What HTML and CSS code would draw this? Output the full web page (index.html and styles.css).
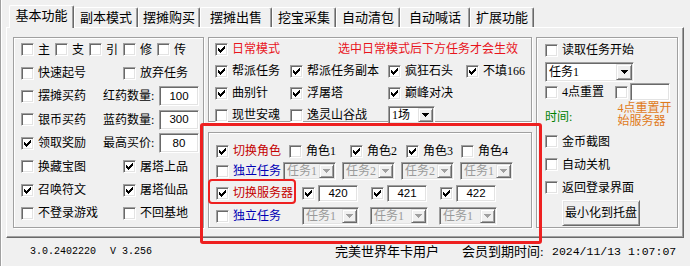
FILE: index.html
```html
<!DOCTYPE html>
<html lang="zh-CN">
<head>
<meta charset="utf-8">
<title>基本功能</title>
<link rel="stylesheet" href="styles.css">
</head>
<body>
<div class="win">
  <div class="tabs">
    <div class="tab sel">基本功能</div>
    <div class="tab w64">副本模式</div>
    <div class="tab w62">摆摊购买</div>
    <div class="tab w72">摆摊出售</div>
    <div class="tab w64">挖宝采集</div>
    <div class="tab w64">自动清包</div>
    <div class="tab w70">自动喊话</div>
    <div class="tab w64">扩展功能</div>
  </div>

  <div class="panel">
    <div class="gb gb-left">
      <div class="row">
        <label class="ck c34"><span class="cb"></span>主</label>
        <label class="ck c34"><span class="cb"></span>支</label>
        <label class="ck c34"><span class="cb"></span>引</label>
        <label class="ck c34"><span class="cb"></span>修</label>
        <label class="ck"><span class="cb"></span>传</label>
      </div>
      <div class="row">
        <label class="ck c102"><span class="cb"></span>快速起号</label>
        <label class="ck"><span class="cb"></span>放弃任务</label>
      </div>
      <div class="row">
        <label class="ck c82"><span class="cb"></span>摆摊买药</label>
        <span class="lbl c56">红药数量:</span>
        <span class="edit w40 h20">100</span>
      </div>
      <div class="row">
        <label class="ck c82"><span class="cb"></span>银币买药</label>
        <span class="lbl c56">蓝药数量:</span>
        <span class="edit w40 h20">300</span>
      </div>
      <div class="row">
        <label class="ck c82"><span class="cb"><svg class="mark" viewBox="0 0 7 7"><path d="M0 2h1v1h1v1h1V3h1V2h1V1h1V0h1v3H6v1H5v1H4v1H3v1H2V6H1V5H0z"/></svg></span>领取奖励</label>
        <span class="lbl c56">最高买价:</span>
        <span class="edit w40 h20">80</span>
      </div>
      <div class="row">
        <label class="ck c102"><span class="cb"></span>换藏宝图</label>
        <label class="ck"><span class="cb"><svg class="mark" viewBox="0 0 7 7"><path d="M0 2h1v1h1v1h1V3h1V2h1V1h1V0h1v3H6v1H5v1H4v1H3v1H2V6H1V5H0z"/></svg></span>屠塔上品</label>
      </div>
      <div class="row">
        <label class="ck c102"><span class="cb"><svg class="mark" viewBox="0 0 7 7"><path d="M0 2h1v1h1v1h1V3h1V2h1V1h1V0h1v3H6v1H5v1H4v1H3v1H2V6H1V5H0z"/></svg></span>召唤符文</label>
        <label class="ck"><span class="cb"><svg class="mark" viewBox="0 0 7 7"><path d="M0 2h1v1h1v1h1V3h1V2h1V1h1V0h1v3H6v1H5v1H4v1H3v1H2V6H1V5H0z"/></svg></span>屠塔仙品</label>
      </div>
      <div class="row">
        <label class="ck c102"><span class="cb"></span>不登录游戏</label>
        <label class="ck"><span class="cb"></span>不回基地</label>
      </div>
    </div>

    <div class="midcol">
      <div class="gb gb-mtop">
        <div class="row">
          <label class="ck c123 red"><span class="cb"><svg class="mark" viewBox="0 0 7 7"><path d="M0 2h1v1h1v1h1V3h1V2h1V1h1V0h1v3H6v1H5v1H4v1H3v1H2V6H1V5H0z"/></svg></span>日常模式</label>
          <span class="note red">选中日常模式后下方任务才会生效</span>
        </div>
        <div class="row">
          <label class="ck c75"><span class="cb"><svg class="mark" viewBox="0 0 7 7"><path d="M0 2h1v1h1v1h1V3h1V2h1V1h1V0h1v3H6v1H5v1H4v1H3v1H2V6H1V5H0z"/></svg></span>帮派任务</label>
          <label class="ck c98"><span class="cb"><svg class="mark" viewBox="0 0 7 7"><path d="M0 2h1v1h1v1h1V3h1V2h1V1h1V0h1v3H6v1H5v1H4v1H3v1H2V6H1V5H0z"/></svg></span>帮派任务副本</label>
          <label class="ck c78"><span class="cb"><svg class="mark" viewBox="0 0 7 7"><path d="M0 2h1v1h1v1h1V3h1V2h1V1h1V0h1v3H6v1H5v1H4v1H3v1H2V6H1V5H0z"/></svg></span>疯狂石头</label>
          <label class="ck"><span class="cb"><svg class="mark" viewBox="0 0 7 7"><path d="M0 2h1v1h1v1h1V3h1V2h1V1h1V0h1v3H6v1H5v1H4v1H3v1H2V6H1V5H0z"/></svg></span>不填166</label>
        </div>
        <div class="row">
          <label class="ck c75"><span class="cb"><svg class="mark" viewBox="0 0 7 7"><path d="M0 2h1v1h1v1h1V3h1V2h1V1h1V0h1v3H6v1H5v1H4v1H3v1H2V6H1V5H0z"/></svg></span>曲别针</label>
          <label class="ck c98"><span class="cb"><svg class="mark" viewBox="0 0 7 7"><path d="M0 2h1v1h1v1h1V3h1V2h1V1h1V0h1v3H6v1H5v1H4v1H3v1H2V6H1V5H0z"/></svg></span>浮屠塔</label>
          <label class="ck"><span class="cb"><svg class="mark" viewBox="0 0 7 7"><path d="M0 2h1v1h1v1h1V3h1V2h1V1h1V0h1v3H6v1H5v1H4v1H3v1H2V6H1V5H0z"/></svg></span>巅峰对决</label>
        </div>
        <div class="row">
          <label class="ck c75"><span class="cb"></span>现世安魂</label>
          <label class="ck c98"><span class="cb"></span>逸灵山谷战</label>
          <div class="combo w47 h18"><span class="cv">1场</span><span class="cbtn"><svg class="tri" viewBox="0 0 7 4"><path d="M0 0h7v1H6v1H5v1H4v1H3V3H2V2H1V1H0z"/></svg></span></div>
        </div>
      </div>

      <div class="gb gb-mbot">
        <div class="row">
          <label class="ck c73 dred"><span class="cb"><svg class="mark" viewBox="0 0 7 7"><path d="M0 2h1v1h1v1h1V3h1V2h1V1h1V0h1v3H6v1H5v1H4v1H3v1H2V6H1V5H0z"/></svg></span>切换角色</label>
          <label class="ck c61"><span class="cb"></span>角色1</label>
          <label class="ck c56"><span class="cb"><svg class="mark" viewBox="0 0 7 7"><path d="M0 2h1v1h1v1h1V3h1V2h1V1h1V0h1v3H6v1H5v1H4v1H3v1H2V6H1V5H0z"/></svg></span>角色2</label>
          <label class="ck c55"><span class="cb"><svg class="mark" viewBox="0 0 7 7"><path d="M0 2h1v1h1v1h1V3h1V2h1V1h1V0h1v3H6v1H5v1H4v1H3v1H2V6H1V5H0z"/></svg></span>角色3</label>
          <label class="ck"><span class="cb"></span>角色4</label>
        </div>
        <div class="row">
          <label class="ck c67 blue"><span class="cb"></span>独立任务</label>
          <div class="combo dis w53 h18 gap6"><span class="cv">任务1</span><span class="cbtn"><svg class="tri" viewBox="0 0 7 4"><path d="M0 0h7v1H6v1H5v1H4v1H3V3H2V2H1V1H0z"/></svg></span></div>
          <div class="combo dis w53 h18 gap6"><span class="cv">任务2</span><span class="cbtn"><svg class="tri" viewBox="0 0 7 4"><path d="M0 0h7v1H6v1H5v1H4v1H3V3H2V2H1V1H0z"/></svg></span></div>
          <div class="combo dis w53 h18 gap6"><span class="cv">任务2</span><span class="cbtn"><svg class="tri" viewBox="0 0 7 4"><path d="M0 0h7v1H6v1H5v1H4v1H3V3H2V2H1V1H0z"/></svg></span></div>
          <div class="combo dis w53 h18"><span class="cv">任务1</span><span class="cbtn"><svg class="tri" viewBox="0 0 7 4"><path d="M0 0h7v1H6v1H5v1H4v1H3V3H2V2H1V1H0z"/></svg></span></div>
        </div>
        <div class="row">
          <label class="ck c86 dred"><span class="cb"><svg class="mark" viewBox="0 0 7 7"><path d="M0 2h1v1h1v1h1V3h1V2h1V1h1V0h1v3H6v1H5v1H4v1H3v1H2V6H1V5H0z"/></svg></span>切换服务器</label>
          <div class="srv"><span class="cb"><svg class="mark" viewBox="0 0 7 7"><path d="M0 2h1v1h1v1h1V3h1V2h1V1h1V0h1v3H6v1H5v1H4v1H3v1H2V6H1V5H0z"/></svg></span><span class="edit w40 h17">420</span></div>
          <div class="srv"><span class="cb"><svg class="mark" viewBox="0 0 7 7"><path d="M0 2h1v1h1v1h1V3h1V2h1V1h1V0h1v3H6v1H5v1H4v1H3v1H2V6H1V5H0z"/></svg></span><span class="edit w40 h17">421</span></div>
          <div class="srv"><span class="cb"><svg class="mark" viewBox="0 0 7 7"><path d="M0 2h1v1h1v1h1V3h1V2h1V1h1V0h1v3H6v1H5v1H4v1H3v1H2V6H1V5H0z"/></svg></span><span class="edit w40 h17">422</span></div>
        </div>
        <div class="row">
          <label class="ck c86 blue"><span class="cb"></span>独立任务</label>
          <div class="combo dis w57 h18 gap11"><span class="cv">任务1</span><span class="cbtn"><svg class="tri" viewBox="0 0 7 4"><path d="M0 0h7v1H6v1H5v1H4v1H3V3H2V2H1V1H0z"/></svg></span></div>
          <div class="combo dis w58 h18 gap11"><span class="cv">任务1</span><span class="cbtn"><svg class="tri" viewBox="0 0 7 4"><path d="M0 0h7v1H6v1H5v1H4v1H3V3H2V2H1V1H0z"/></svg></span></div>
          <div class="combo dis w58 h18"><span class="cv">任务1</span><span class="cbtn"><svg class="tri" viewBox="0 0 7 4"><path d="M0 0h7v1H6v1H5v1H4v1H3V3H2V2H1V1H0z"/></svg></span></div>
        </div>
      </div>
    </div>

    <div class="gb gb-right">
      <div class="rrow rr1"><label class="ck"><span class="cb"></span>读取任务开始</label></div>
      <div class="combo w89 h20"><span class="cv">任务1</span><span class="cbtn"><svg class="tri" viewBox="0 0 7 4"><path d="M0 0h7v1H6v1H5v1H4v1H3V3H2V2H1V1H0z"/></svg></span></div>
      <div class="rrow rr3">
        <label class="ck c70"><span class="cb"></span>4点重置</label>
        <span class="cb"></span>
        <span class="edit w40 h18 ml2"></span>
      </div>
      <div class="rrow rr4">
        <span class="green c73">时间:</span>
        <span class="orange tip">4点重置开始服务器</span>
      </div>
      <div class="rrow rr5"><label class="ck"><span class="cb"></span>金币截图</label></div>
      <div class="rrow rr5"><label class="ck"><span class="cb"></span>自动关机</label></div>
      <div class="rrow rr5"><label class="ck"><span class="cb"></span>返回登录界面</label></div>
      <div class="btn">最小化到托盘</div>
    </div>
  </div>

  <div class="status">
    <span class="mono s1">3.0.2402220</span>
    <span class="mono s2">V 3.256</span>
    <span class="s3">完美世界年卡用户</span>
    <span class="s4">会员到期时间:</span>
    <span class="mono date">2024/11/13 1:07:07</span>
  </div>

  <div class="hl hl-big"></div>
  <div class="hl hl-small"></div>
</div>
</body>
</html>
```

FILE: styles.css
```css
* { box-sizing: border-box; }

body {
  margin: 0;
  width: 690px;
  height: 266px;
  overflow: hidden;
  background: #f0f0f0;
  color: #000;
  font-family: "Liberation Serif", "Noto Sans CJK SC", serif;
  font-size: 12px;
  line-height: 14px;
}

.win {
  position: relative;
  width: 690px;
  height: 266px;
  box-shadow: inset 1px 0 #a0a0a0, inset 2px 0 #fff;
}

/* ---------- tabs ---------- */
.tabs {
  display: flex;
  align-items: flex-end;
  height: 27px;
  padding-left: 9px;
}
.tab {
  height: 20px;
  display: flex;
  align-items: center;
  justify-content: center;
  font-size: 13px;
  line-height: 16px;
  border-top: 1px solid #fff;
  border-left: 1px solid #fff;
  border-right: 1px solid #696969;
  box-shadow: inset -1px 0 #a0a0a0;
  border-radius: 2px 2px 0 0;
}
.tab.sel {
  width: 65px;
  height: 23px;
  margin-bottom: -1px;
  position: relative;
  z-index: 1;
  background: #f0f0f0;
  padding-bottom: 2px;
}
.w62 { width: 62px; }
.w64 { width: 64px; }
.w70 { width: 70px; }
.w72 { width: 72px; }

/* ---------- panel ---------- */
.panel {
  margin-left: 6px;
  width: 678px;
  height: 211px;
  border-top: 1px solid #fff;
  border-left: 1px solid #fff;
  border-right: 1px solid #696969;
  border-bottom: 1px solid #696969;
  box-shadow: inset -1px -1px #a0a0a0;
  display: flex;
  align-items: flex-start;
  padding: 9px 0 0 6px;
}

.gb {
  border: 1px solid #a0a0a0;
  box-shadow: inset 1px 1px #fff, 1px 1px #fff;
}

.row {
  display: flex;
  align-items: center;
  white-space: nowrap;
}

.gb-left {
  width: 191px;
  height: 191px;
  padding-left: 7px;
  display: grid;
  grid-auto-rows: 23.4px;
}

.midcol {
  margin-left: 4px;
  width: 324px;
  display: flex;
  flex-direction: column;
}
.gb-mtop {
  height: 85px;
  padding-left: 6px;
  display: grid;
  grid-auto-rows: 22px;
}
.gb-mbot {
  margin-top: 10px;
  height: 96px;
  padding: 8px 0 0 7px;
  display: grid;
  grid-template-rows: 20px 20px 24px 22px;
}

.gb-right {
  margin-left: 4px;
  width: 142px;
  height: 191px;
  padding-left: 8px;
  display: flex;
  flex-direction: column;
}
.rrow { display: flex; align-items: center; white-space: nowrap; }
.rr1 { height: 24px; }
.rr3 { height: 20px; }
.rr4 { height: 28px; align-items: stretch; }
.rr4 .green { align-self: center; padding-top: 1px; }
.rr5 { height: 23px; }

/* ---------- widths ---------- */
.c34 { width: 34px; }
.c55 { width: 55px; }
.c56 { width: 56px; }
.c61 { width: 61px; }
.c67 { width: 67px; }
.c70 { width: 70px; }
.c73 { width: 73px; }
.c75 { width: 75px; }
.c78 { width: 78px; }
.c82 { width: 82px; }
.c86 { width: 86px; }
.c98 { width: 98px; }
.c102 { width: 102px; }
.c123 { width: 123px; }
.w40 { width: 40px; }
.w47 { width: 47px; }
.w53 { width: 53px; }
.w57 { width: 57px; }
.w58 { width: 58px; }
.w89 { width: 89px; }
.h17 { height: 17px; }
.h18 { height: 18px; }
.h20 { height: 20px; }
.gap6 { margin-right: 6px; }
.gap11 { margin-right: 11px; }
.ml2 { margin-left: 2px; }

/* ---------- controls ---------- */
.ck {
  display: flex;
  align-items: center;
  flex-shrink: 0;
}
.cb {
  display: block;
  width: 13px;
  height: 13px;
  flex-shrink: 0;
  margin-right: 4px;
  padding: 2px;
  background: #fff;
  border: 1px solid;
  border-color: #a0a0a0 #fff #fff #a0a0a0;
  box-shadow: inset 1px 1px #696969, inset -1px -1px #e3e3e3;
}
.rr3 > .cb { margin-right: 0; }
.mark {
  display: block;
  width: 7px;
  height: 7px;
}
.mark path { fill: #000; }

.lbl { flex-shrink: 0; }

.edit {
  display: flex;
  align-items: center;
  justify-content: center;
  flex-shrink: 0;
  background: #fff;
  border: 1px solid;
  border-color: #a0a0a0 #fff #fff #a0a0a0;
  box-shadow: inset 1px 1px #696969, inset -1px -1px #e3e3e3;
  font-family: "Liberation Sans", sans-serif;
  font-size: 11.5px;
  line-height: 13px;
}

.srv {
  display: flex;
  align-items: center;
  margin-right: 13px;
}
.srv .cb { margin-right: 3px; }

.combo {
  display: flex;
  flex-shrink: 0;
  padding: 1px;
  background: #fff;
  border: 1px solid;
  border-color: #a0a0a0 #fff #fff #a0a0a0;
  box-shadow: inset 1px 1px #696969, inset -1px -1px #e3e3e3;
}
.cv {
  flex: 1;
  display: flex;
  align-items: center;
  padding-left: 2px;
  overflow: hidden;
  white-space: nowrap;
}
.cbtn {
  width: 15px;
  flex-shrink: 0;
  display: flex;
  align-items: center;
  justify-content: center;
  background: #f0f0f0;
  border: 1px solid;
  border-color: #e3e3e3 #696969 #696969 #e3e3e3;
  box-shadow: inset 1px 1px #fff, inset -1px -1px #a0a0a0;
}
.h20 .cbtn { width: 16px; }
.tri {
  display: block;
  width: 7px;
  height: 4px;
}
.tri path { fill: #000; }
.combo.dis { background: #f0f0f0; color: #9a9a9a; }
.combo.dis .tri path { fill: #a0a0a0; }

.btn {
  margin: 1px 0 0 17px;
  width: 78px;
  height: 26px;
  display: flex;
  align-items: center;
  justify-content: center;
  background: #f0f0f0;
  border: 1px solid;
  border-color: #fff #696969 #696969 #fff;
  box-shadow: inset 1px 1px #e3e3e3, inset -1px -1px #a0a0a0;
}

/* ---------- colours ---------- */
.red { color: #e8141c; }
.dred { color: #c40000; }
.blue { color: #0000b4; }
.green { color: #008000; }
.orange { color: #e07a1a; }
.note { padding-left: 0; }
.tip {
  width: 60px;
  white-space: normal;
  line-height: 13px;
  padding-top: 0;
}

/* ---------- status bar ---------- */
.status {
  display: flex;
  align-items: center;
  height: 27px;
  padding-left: 30px;
  font-size: 13px;
  line-height: 15px;
  white-space: nowrap;
}
.mono { font-family: "Liberation Mono", monospace; font-size: 10px; }
.date { font-size: 11.5px; }
.s1 { width: 80px; }
.s2 { width: 225px; }
.s3 { width: 127px; }
.s4 { width: 90px; }

/* ---------- red highlight annotations ---------- */
.hl {
  position: absolute;
  pointer-events: none;
  border: 3px solid #ee2020;
  border-radius: 3px;
}
.hl-big {
  left: 200px;
  top: 123px;
  width: 342px;
  height: 121px;
}
.hl-small {
  left: 208px;
  top: 179px;
  width: 88px;
  height: 25px;
  border-width: 2.5px;
  border-radius: 4px;
}
```
